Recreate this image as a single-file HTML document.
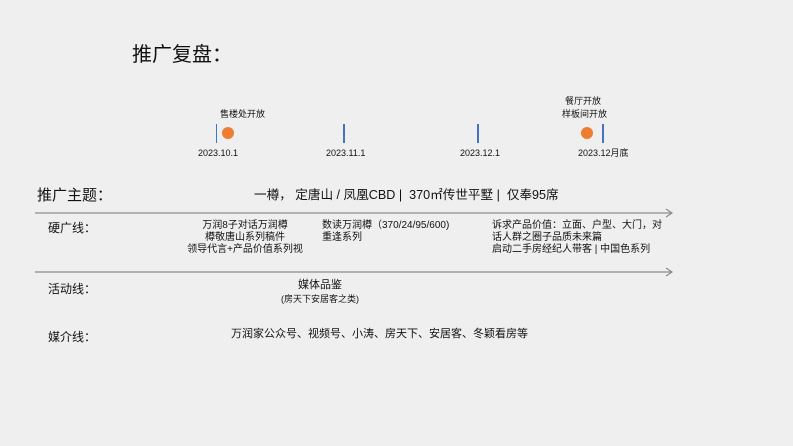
<!DOCTYPE html>
<html><head><meta charset="utf-8"><style>
body{margin:0;width:793px;height:446px;background:#efefef;position:relative;overflow:hidden;font-family:"Liberation Sans","Noto Sans CJK SC",sans-serif;color:#111}
.a{position:absolute;white-space:nowrap;line-height:1}
.s{font-size:9px}
.m{font-size:10px;line-height:12px}
.v{position:absolute;width:2px;background:#4472c4;top:124px;height:19px}
.d{position:absolute;width:12px;height:12px;border-radius:50%;background:#ed7d31;top:127px}
.c{text-align:center}
</style></head><body>
<div class="a" style="left:132px;top:45px;font-size:20px">推广复盘：</div>

<div class="a s" style="left:220px;top:110px">售楼处开放</div>
<div class="a s" style="left:565px;top:97px">餐厅开放</div>
<div class="a s" style="left:562px;top:110px">样板间开放</div>
<div class="v" style="left:216px;width:1px"></div>
<div class="v" style="left:343px"></div>
<div class="v" style="left:477px"></div>
<div class="v" style="left:602px"></div>
<div class="d" style="left:222px"></div>
<div class="d" style="left:581px"></div>
<div class="a s" style="left:198px;top:149px">2023.10.1</div>
<div class="a s" style="left:326px;top:149px">2023.11.1</div>
<div class="a s" style="left:460px;top:149px">2023.12.1</div>
<div class="a s" style="left:578px;top:149px">2023.12月底</div>

<div class="a" style="left:37px;top:188px;font-size:15px">推广主题：</div>
<div class="a" style="left:254px;top:189px;font-size:12.6px">一樽，&nbsp;定唐山 / 凤凰CBD |&nbsp; 370㎡传世平墅 |&nbsp; 仅奉95席</div>

<svg style="position:absolute;left:0;top:0" width="793" height="446">
<line x1="35" y1="213" x2="672" y2="213" stroke="#8c8c8c" stroke-width="1.3"/>
<polyline points="666,209 672,213 666,217" fill="none" stroke="#8c8c8c" stroke-width="1.2"/>
<line x1="35" y1="272" x2="672" y2="272" stroke="#8c8c8c" stroke-width="1.3"/>
<polyline points="666,268 672,272 666,276" fill="none" stroke="#8c8c8c" stroke-width="1.2"/>
</svg>

<div class="a" style="left:48px;top:222px;font-size:12px">硬广线：</div>
<div class="a m c" style="left:180px;top:220px;width:130px">万润8子对话万润樽<br>樽敬唐山系列稿件<br>领导代言+产品价值系列视</div>
<div class="a m" style="left:322px;top:220px">数读万润樽（370/24/95/600)<br>重逢系列</div>
<div class="a m" style="left:492px;top:220px">诉求产品价值：立面、户型、大门，对<br>话人群之圈子品质未来篇<br>启动二手房经纪人带客 | 中国色系列</div>

<div class="a" style="left:48px;top:283px;font-size:12px">活动线：</div>
<div class="a c" style="left:270px;top:280px;width:100px;font-size:11px">媒体品鉴</div>
<div class="a c s" style="left:270px;top:295px;width:100px">(房天下安居客之类)</div>

<div class="a" style="left:48px;top:331px;font-size:12px">媒介线：</div>
<div class="a" style="left:231px;top:329px;font-size:11px">万润家公众号、视频号、小涛、房天下、安居客、冬颖看房等</div>
</body></html>
